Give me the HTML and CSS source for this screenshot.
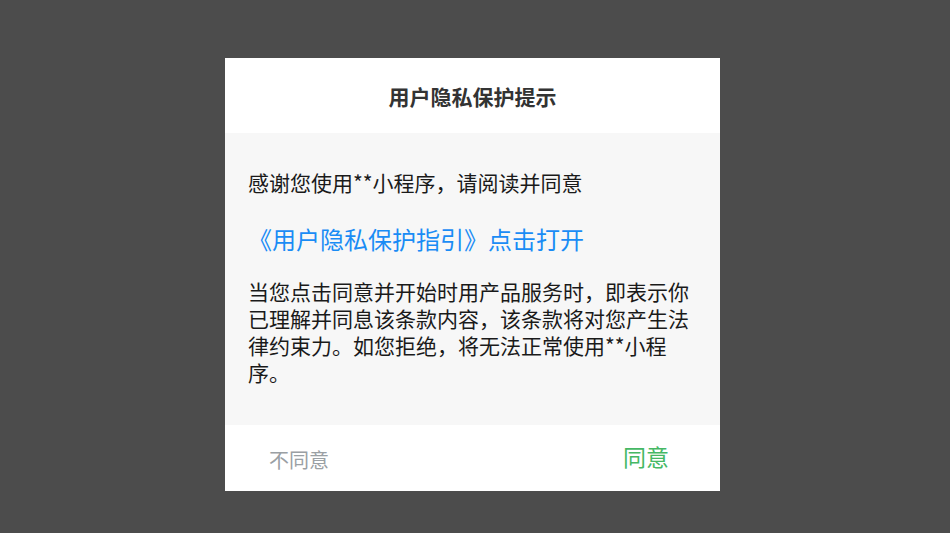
FILE: index.html
```html
<!DOCTYPE html>
<html>
<head>
  <meta charset="utf-8">
  <title>用户隐私保护提示</title>
  <link rel="stylesheet" href="styles.css">
</head>
<body>

<!-- Privacy dialog -->
<div class="dialog">
  <div class="dialog-title">用户隐私保护提示</div>

  <div class="dialog-body">
    <p class="intro">感谢您使用**小程序，请阅读并同意</p>
    <a class="guide-link" href="#">《用户隐私保护指引》点击打开</a>
    <p class="terms">当您点击同意并开始时用产品服务时，即表示你已理解并同息该条款内容，该条款将对您产生法律约束力。如您拒绝，将无法正常使用**小程序。</p>
  </div>

  <div class="dialog-footer">
    <button class="btn-refuse">不同意</button>
    <button class="btn-agree">同意</button>
  </div>
</div>

</body>
</html>
```

FILE: styles.css
```css
body {
  margin: 0;
  height: 533px;
  background: #4c4c4c;
  font-family: "Noto Sans CJK SC", "Noto Sans", sans-serif;
  display: flex;
  justify-content: center;
  align-items: flex-start;
  padding-top: 58px;
  box-sizing: border-box;
}

.dialog {
  width: 495px;
  margin-left: -5px;
  background: white;
}

.dialog-title {
  height: 75px;
  display: flex;
  align-items: center;
  justify-content: center;
  font-size: 21px;
  font-weight: bold;
  color: #333;
}

.dialog-body {
  background: #f7f7f7;
  padding: 36px 23px 34px 23px;
  height: 292px;
  box-sizing: border-box;
}

.intro, .terms {
  margin: 0;
  font-size: 21px;
  line-height: 27px;
  color: #1a1a1a;
}

.guide-link {
  display: block;
  margin: 27px 0 24px;
  font-size: 24px;
  line-height: 31px;
  color: #1a8cf5;
  text-decoration: none;
}

.dialog-footer {
  height: 66px;
  display: flex;
  align-items: center;
  justify-content: space-between;
  padding: 0 51px 0 44px;
}

.dialog-footer button {
  background: none;
  border: none;
  padding: 0;
  font-family: inherit;
  cursor: pointer;
}

.btn-refuse {
  font-size: 20px;
  color: #9aa0a4;
  margin-top: 2px;
}

.btn-agree {
  font-size: 23px;
  color: #45b864;
  margin-bottom: 4px;
}
```
